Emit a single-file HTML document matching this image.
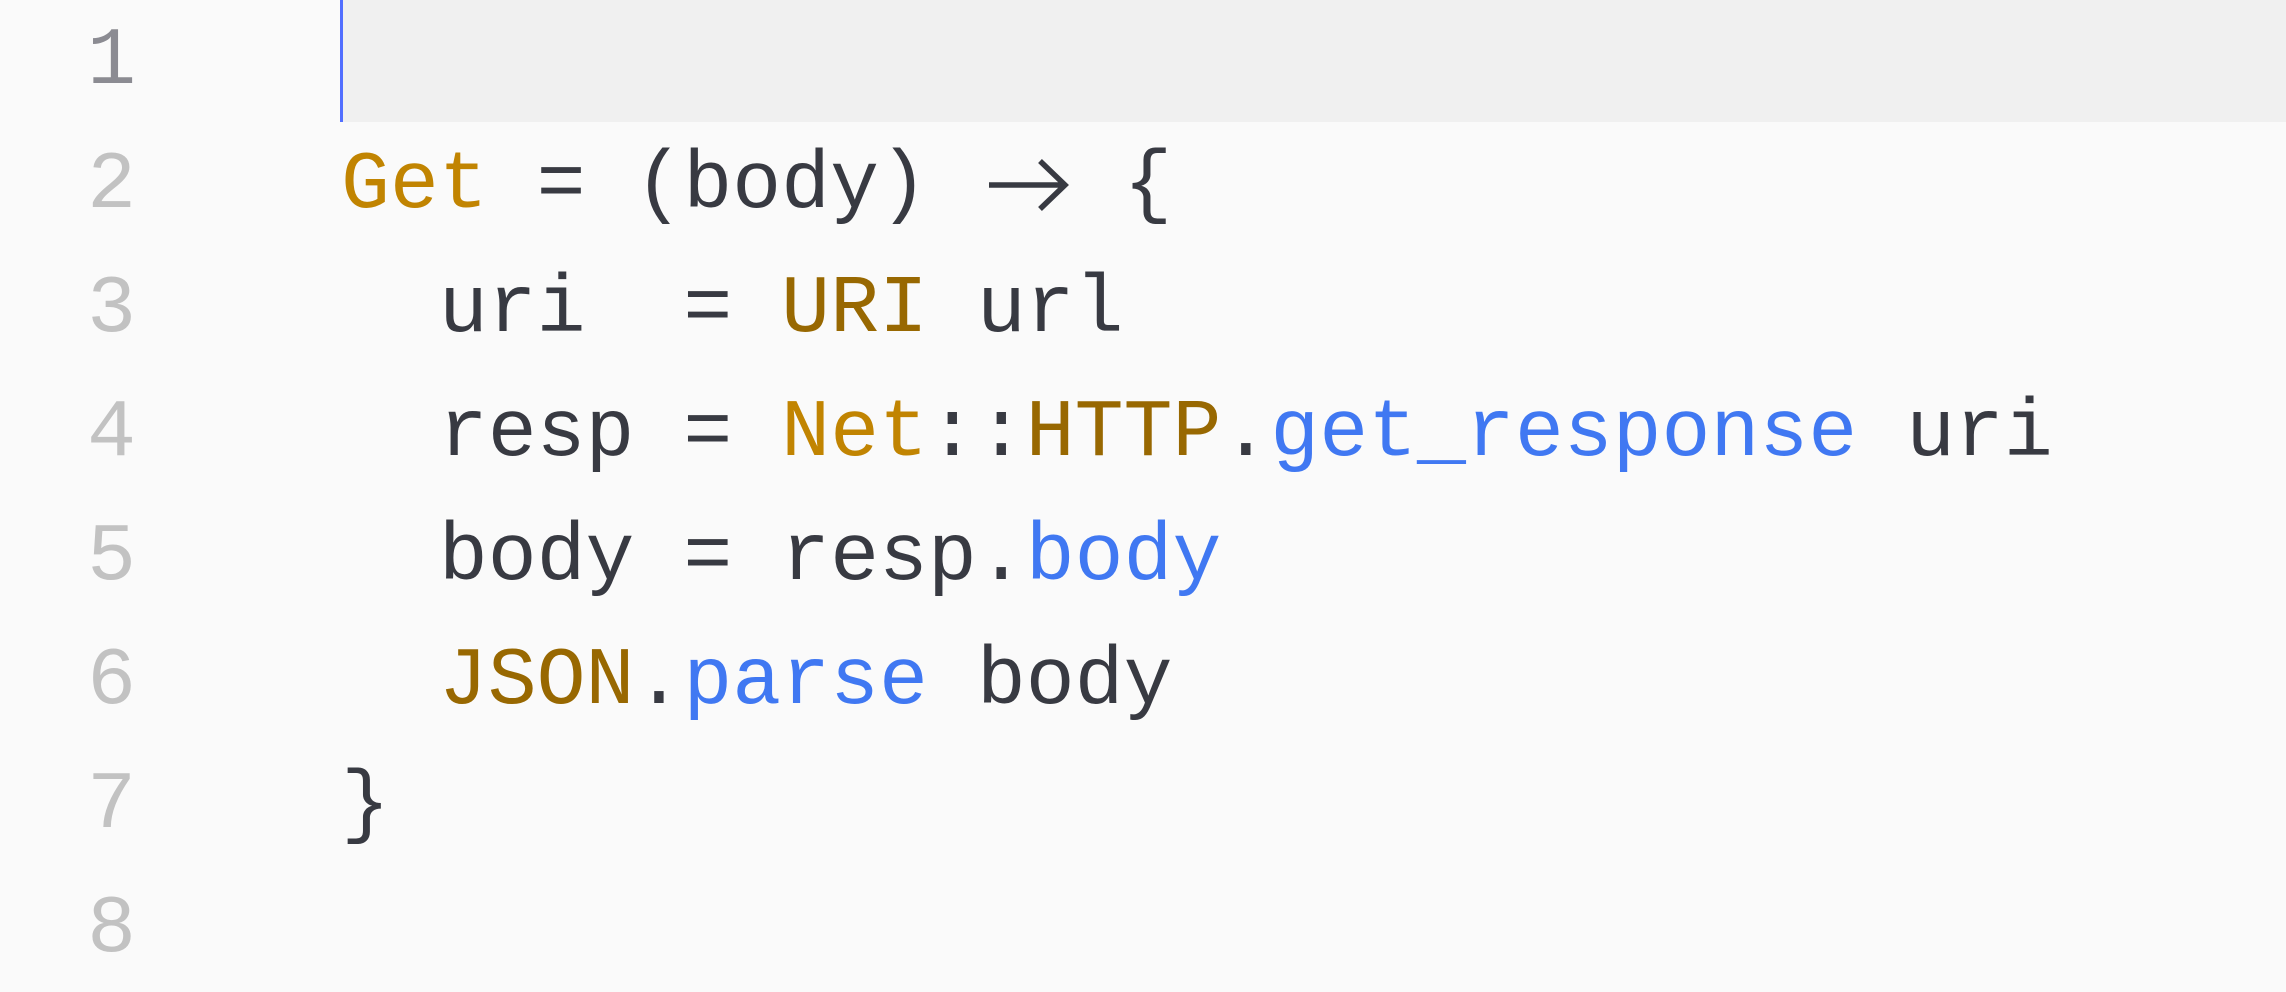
<!DOCTYPE html>
<html><head><meta charset="utf-8"><style>
html,body{margin:0;padding:0;width:2286px;height:982px;overflow:hidden;background:#fafafa}
.hl{position:absolute;left:341px;top:0;width:1945px;height:122px;background:#f0f0f0}
.cur{position:absolute;left:340px;top:0;width:3px;height:122px;background:#526fff}
.ln,.cd{position:absolute;height:124px;line-height:124px;font-family:"Liberation Mono",monospace;font-size:81.5px;white-space:pre;padding-top:0;box-sizing:border-box}
.ln{left:0;width:136px;text-align:right;color:#c2c2c2}
.cd{left:341px;color:#383a42}
.o{color:#c18401}.g{color:#986801}.b{color:#4078f2}
.ar{display:inline-block;width:2ch}
</style></head><body>
<div class="hl"></div><div class="cur"></div>
<div class="ln" style="top:0;color:#8b8b92">1</div>
<div class="ln" style="top:124px">2</div>
<div class="ln" style="top:248px">3</div>
<div class="ln" style="top:372px">4</div>
<div class="ln" style="top:496px">5</div>
<div class="ln" style="top:620px">6</div>
<div class="ln" style="top:744px">7</div>
<div class="ln" style="top:868px">8</div>
<div class="cd" style="top:124px"><span class="o">Get</span> = (body) <span class="ar"> </span> {</div>
<svg style="position:absolute;left:985px;top:158px" width="90" height="56" viewBox="0 0 90 56"><path d="M4 27 H80 M55 3 L80 27 L55 51" fill="none" stroke="#383a42" stroke-width="5.5"/></svg>
<div class="cd" style="top:248px">  uri  = <span class="g">URI</span> url</div>
<div class="cd" style="top:372px">  resp = <span class="o">Net</span>::<span class="g">HTTP</span>.<span class="b">get_response</span> uri</div>
<div class="cd" style="top:496px">  body = resp.<span class="b">body</span></div>
<div class="cd" style="top:620px">  <span class="g">JSON</span>.<span class="b">parse</span> body</div>
<div class="cd" style="top:744px">}</div>
</body></html>
